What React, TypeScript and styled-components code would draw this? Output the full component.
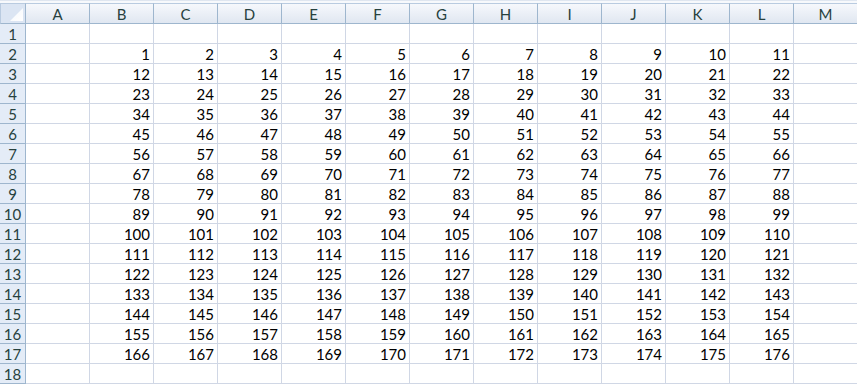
import React from 'react';
import styled, { createGlobalStyle } from 'styled-components';

const GlobalStyle = createGlobalStyle`
  html, body {
    margin: 0;
    padding: 0;
    background: #ffffff;
    overflow: hidden;
  }
`

const columns = ['A', 'B', 'C', 'D', 'E', 'F', 'G', 'H', 'I', 'J', 'K', 'L', 'M']
const rowCount = 18

// B..L on rows 2..17 hold 1..176
const cellValue = (row: number, col: number) => {
  if (row < 2 || row > 17 || col < 1 || col > 11) return ''
  return String((row - 2) * 11 + col)
}

const App = () => {
  return (
    <>
      <GlobalStyle />
      <Sheet>
        <TopStrip />
        <Grid>
          <Corner>
            <svg width="13" height="13" viewBox="0 0 13 13">
              <defs>
                <linearGradient id="tri" x1="0" y1="0" x2="1" y2="1">
                  <stop offset="0" stopColor="#f4f7fb" />
                  <stop offset="1" stopColor="#ffffff" />
                </linearGradient>
              </defs>
              <polygon points="13,0 13,13 0,13" fill="url(#tri)" />
            </svg>
          </Corner>
          {columns.map((c) => (
            <ColHeader key={c}>{c}</ColHeader>
          ))}
          {Array.from({ length: rowCount }, (_, i) => i + 1).map((r) => (
            <React.Fragment key={r}>
              <RowHeader>{r}</RowHeader>
              {columns.map((c, ci) => (
                <Cell key={c}>{cellValue(r, ci)}</Cell>
              ))}
            </React.Fragment>
          ))}
        </Grid>
      </Sheet>
    </>
  )
}

export default App

const Sheet = styled.div`
  width: 857px;
  height: 384px;
  overflow: hidden;
  font-family: Lato, "Liberation Sans", sans-serif;
`
const TopStrip = styled.div`
  height: 3px;
  box-sizing: border-box;
  background: #f7f9fc;
  border-top: 1px solid #dfe6f0;
`
const Grid = styled.div`
  display: grid;
  grid-template-columns: 26px repeat(13, 64px);
  grid-template-rows: 21px repeat(18, 20px);
  width: 858px;
`
const HeaderBase = styled.div`
  box-sizing: border-box;
  display: flex;
  align-items: center;
  justify-content: center;
  font-size: 15px;
  color: #27413e;
  border-right: 1px solid #9eb6ce;
  border-bottom: 1px solid #9eb6ce;
`
const Corner = styled(HeaderBase)`
  background: #dbe5f3;
  border-top: 1px solid #b9cbe0;
  border-left: 1px solid #b9cbe0;
  justify-content: flex-end;
  align-items: flex-end;
  padding: 0 2px 2px 0;
`
const ColHeader = styled(HeaderBase)`
  background: linear-gradient(#f6f8fc, #e0e7f1);
  border-top: 1px solid #b9cbe0;
  padding-top: 1px;
`
const RowHeader = styled(HeaderBase)`
  background: #e4ecf7;
  padding-top: 1px;
`
const Cell = styled.div`
  box-sizing: border-box;
  border-right: 1px solid #d0d7e5;
  border-bottom: 1px solid #d0d7e5;
  font-size: 15px;
  color: #000000;
  text-align: right;
  padding: 1px 3px 0 0;
  line-height: 18px;
`
